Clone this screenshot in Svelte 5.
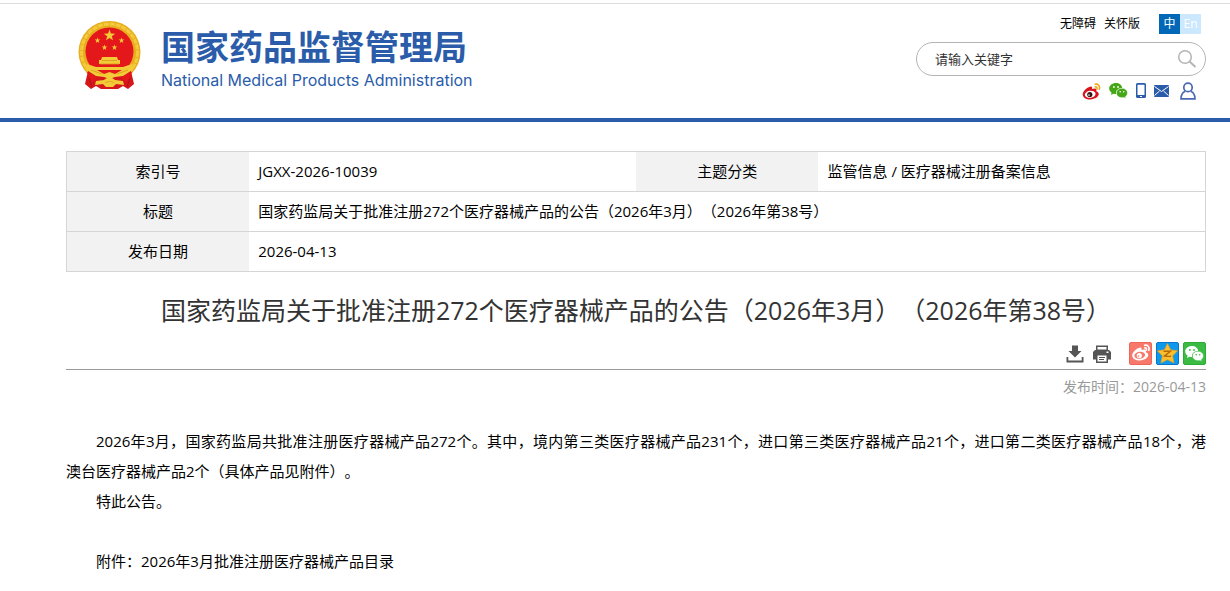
<script lang="ts">
	const title = '国家药监局关于批准注册272个医疗器械产品的公告（2026年3月）（2026年第38号）';
	const date = '2026-04-13';
	let keyword = $state('');

	const star = (cx: number, cy: number, r: number) =>
		Array.from({ length: 10 }, (_, i) => {
			const a = (Math.PI / 5) * i - Math.PI / 2;
			const d = i % 2 ? r * 0.4 : r;
			return `${(cx + d * Math.cos(a)).toFixed(2)},${(cy + d * Math.sin(a)).toFixed(2)}`;
		}).join(' ');
</script>

{#snippet weibo(body: string, eye: string, pupil: string, wave: string)}
	<path fill={body} d="M8.2 4.6C4.6 5.2.2 9.4.2 12.4c0 3.100 3.600 5 7.600 5 4.900 0 8.400-2.700 8.400-5.300 0-1.600-1.100-2.500-2.400-2.900.5-1.600 0-2.600-1.300-2.800-.9-.1-2 .2-3 .6.4-1.600 0-2.600-1.300-2.400z" />
	<ellipse cx="7.700" cy="12.300" rx="5.400" ry="3.500" fill={eye} transform="rotate(-8 7.700 12.300)" />
	<circle cx="7.300" cy="12.500" r="2.600" fill={pupil} />
	<circle cx="6.500" cy="13.100" r=".8" fill={eye} />
	<path fill="none" stroke={wave} stroke-width="1.600" stroke-linecap="round" d="M12.600 2.200c3-.6 5.200 1.900 4.300 5M12.800 4.900c1.400-.2 2.100.8 1.700 2.100" />
{/snippet}

{#snippet wechat(color: string, hole: string)}
	<path fill={color} d="M7 1C3.200 1 .2 3.400.2 6.500c0 1.700.9 3.200 2.400 4.200L2 13l2.500-1.300c.9.3 1.700.4 2.600.4-.6-3.600 2.300-6.100 6.200-6C12.800 3 10.200 1 7 1z" />
	<path fill={color} stroke={hole} stroke-width=".5" d="M12.900 6.300c-3.100 0-5.500 2-5.500 4.700s2.400 4.700 5.500 4.700c.7 0 1.400-.1 2-.3l2 1-.5-1.700c1.300-.9 2.100-2.200 2.100-3.700 0-2.700-2.500-4.700-5.600-4.700z" />
	<g fill={hole}>
		<circle cx="4.900" cy="5" r=".9" />
		<circle cx="9" cy="5" r=".9" />
		<circle cx="11.200" cy="9.700" r=".8" />
		<circle cx="14.700" cy="9.700" r=".8" />
	</g>
{/snippet}

<header>
	<a class="logo" href="#home">
		<svg class="emblem" viewBox="0 0 64 70" aria-hidden="true">
			<circle cx="31.500" cy="32" r="31" fill="#e8ae20" />
			<circle cx="31.500" cy="32" r="28" fill="none" stroke="#f3ca3c" stroke-width="3" stroke-dasharray="5 1" />
			<circle cx="31.500" cy="31.500" r="24" fill="#e4181a" />
			<g fill="#f3cb38">
				<polygon points={star(31.5, 15.5, 6)} />
				<polygon points={star(19.5, 20.5, 3)} />
				<polygon points={star(43.5, 20.5, 3)} />
				<polygon points={star(26.5, 27.5, 3)} />
				<polygon points={star(36.5, 27.5, 3)} />
				<path d="M24 37h15l1 3h2v4H21v-4h2z" />
			</g>
			<path fill="#d5161b" d="M10 51h43l3 13-6 5-5-3-5 3H23l-5-3-5 3-6-5z" />
			<path fill="#f3cb38" d="M9 44l9 3h27l9-3 2 5-11 7-8 1-5.500 2-5.500-2-8-1L7 49z" />
			<path fill="#e4181a" d="M19 50h25l-7 4-5.500-2-5.500 2zM9 52l10 5-5 5zM54 52l-10 5 5 5z" />
			<path fill="#f3cb38" d="M18 61l8-1c3-3 8-3 11 0l8 1 1 4-8-1-3 3h-7l-3-3-8 1z" />
			<path fill="none" stroke="#d9981a" stroke-width=".8" d="M22 44h19M13 50l11 4M50 50l-11 4M27 63c3-2 6-2 9 0M24 40.500h15" />
			<path fill="none" stroke="#a90f16" stroke-width=".8" d="M11 58l3 9M52 58l-3 9" />
		</svg>
		<span class="names">
			<span class="name-zh">国家药品监督管理局</span>
			<span class="name-en">National Medical Products Administration</span>
		</span>
	</a>

	<div class="tools">
		<nav class="top-links">
			<a href="#accessible">无障碍</a>
			<a href="#care">关怀版</a>
			<span class="lang">
				<a class="active" href="#zh">中</a><a href="#en">En</a>
			</span>
		</nav>
		<form class="search" onsubmit={(e) => e.preventDefault()}>
			<input type="text" aria-label="请输入关键字" placeholder="请输入关键字" bind:value={keyword} />
			<button type="submit" aria-label="搜索">
				<svg width="20" height="20" viewBox="0 0 20 20" fill="none" stroke="#b5b5b5" stroke-width="1.500">
					<circle cx="8" cy="8" r="6.300" />
					<path d="M12.500 12.500l6 5.500" stroke-width="2" />
				</svg>
			</button>
		</form>
		<nav class="social">
			<a href="#weibo" aria-label="微博">
				<svg width="19" height="18" viewBox="0 0 18 18">{@render weibo('#d8151c', '#fff', '#3a1414', '#f0a81c')}</svg>
			</a>
			<a href="#wechat" aria-label="微信">
				<svg width="19" height="18" viewBox="0 0 19 18">{@render wechat('#45a616', '#fff')}</svg>
			</a>
			<a href="#mobile" aria-label="移动端">
				<svg width="10" height="18" viewBox="0 0 10 18">
					<path fill="#2a5caa" fill-rule="evenodd" d="M1.500 1h7A1.500 1.500 0 0 1 10 2.500v12A1.500 1.500 0 0 1 8.500 16h-7A1.500 1.500 0 0 1 0 14.500v-12A1.500 1.500 0 0 1 1.500 1zM1.500 2.700v10.300h7V2.700zM4 14v1h2v-1z" />
				</svg>
			</a>
			<a href="#mail" aria-label="邮箱">
				<svg width="15" height="18" viewBox="0 0 15 18">
					<rect y="3" width="15" height="12" rx="1" fill="#2a5caa" />
					<path d="M.5 4.500l7 5 7-5M.5 13.500l5-4.500M14.500 13.500l-5-4.500" fill="none" stroke="#fff" />
				</svg>
			</a>
			<a class="user" href="#user" aria-label="用户">
				<svg width="16" height="18" viewBox="0 0 16 18" fill="none" stroke="#4a68b4" stroke-width="1.700">
					<circle cx="8" cy="5.400" r="4.200" />
					<path d="M5.200 9.200C2.500 10.400 1 12.600 1 16.800h14c0-4.200-1.500-6.400-4.200-7.600" />
				</svg>
			</a>
		</nav>
	</div>
</header>

<main>
	<table>
		<tbody>
			<tr>
				<th scope="row">索引号</th>
				<td>JGXX-2026-10039</td>
				<th scope="row">主题分类</th>
				<td>监管信息 / 医疗器械注册备案信息</td>
			</tr>
			<tr>
				<th scope="row">标题</th>
				<td colspan="3">{title}</td>
			</tr>
			<tr>
				<th scope="row">发布日期</th>
				<td colspan="3">{date}</td>
			</tr>
		</tbody>
	</table>

	<h1>{title}</h1>

	<div class="actions">
		<button aria-label="下载">
			<svg width="18" height="18" viewBox="0 0 18 18" fill="#555">
				<path d="M6 .5h6V6h3.500L9 12.500 2.500 6H6z" />
				<path d="M.5 12v5.500h17V12h-1.800v3.600H2.300V12z" />
			</svg>
		</button>
		<button class="print" aria-label="打印">
			<svg width="18" height="18" viewBox="0 0 18 18">
				<path fill="#555" d="M3 .5h12V5H3zM2 5h14l2 2v7.500h-3V18H3v-3.500H0V7z" />
				<path fill="#fff" d="M4.500 2h9v2.500h-9zM4.500 10.500h9v6h-9zM13.500 6.500h2V8h-2z" />
				<path stroke="#555" d="M6 12.500h6M6 14.500h5" />
			</svg>
		</button>
		<a href="#share-weibo" aria-label="分享到微博">
			<svg width="23" height="23" viewBox="0 0 23 23">
				<rect x=".5" y=".5" width="22" height="22" rx="1.500" fill="#f8786c" stroke="#ee6659" />
				<g transform="translate(3 1)">{@render weibo('#fff', '#f8786c', '#fff', '#fff')}</g>
			</svg>
		</a>
		<a href="#share-qzone" aria-label="分享到QQ空间">
			<svg width="23" height="23" viewBox="0 0 23 23">
				<rect x=".5" y=".5" width="22" height="22" rx="1.500" fill="#0c98ec" stroke="#0975c8" />
				<path fill="#fdbf2d" stroke="#e09a18" stroke-width=".6" stroke-linejoin="round" d="M11.500 1.500l3.200 6.300 7 1-5 5 1.400 7.200-6.600-3.300L4.900 21l1.400-7.200-5-5 7-1z" />
				<path fill="none" stroke="#b66a08" stroke-width="1.400" d="M7.500 9.300h7l-6 4.700c2.200.5 4.500.5 6.500.2" />
			</svg>
		</a>
		<a href="#share-wechat" aria-label="分享到微信">
			<svg width="23" height="23" viewBox="0 0 23 23">
				<rect x=".5" y=".5" width="22" height="22" rx="1.500" fill="#3bbb43" stroke="#2eaa37" />
				<g transform="translate(2 3)">{@render wechat('#fff', '#3bbb43')}</g>
			</svg>
		</a>
	</div>

	<div class="publish">发布时间：{date}</div>

	<article>
		<p>
			2026年3月，国家药监局共批准注册医疗器械产品272个。其中，境内第三类医疗器械产品231个，进口第三类医疗器械产品21个，进口第二类医疗器械产品18个，港<span class="keep">澳台</span>医疗器械产品2个（具体产品见附件）。
		</p>
		<p>特此公告。</p>
		<p class="attachment">附件：<a href="#attachment">2026年3月批准注册医疗器械产品目录</a></p>
	</article>
</main>

<style>
	:global(body) {
		background: #fff;
		color: #000;
		font-family: 'Open Sans', 'Noto Sans CJK SC', sans-serif;
		font-size: 15px;
		text-spacing-trim: space-all;
	}
	a {
		color: inherit;
		text-decoration: none;
	}
	button {
		border: 0;
		padding: 0;
		background: none;
		cursor: pointer;
	}
	svg {
		display: block;
	}

	header {
		display: flex;
		justify-content: space-between;
		align-items: flex-start;
		margin-top: 3px;
		padding: 10px 24px 18px 78px;
		border-top: 1px solid #ddd;
		border-bottom: 4px solid #2a5caa;
	}
	.logo {
		display: flex;
		gap: 19px;
		padding-top: 6px;
		color: #2a5caa;
	}
	.emblem {
		width: 64px;
		height: 70px;
	}
	.names {
		display: flex;
		flex-direction: column;
		padding-top: 6px;
		white-space: nowrap;
	}
	.name-zh {
		font-family: 'Noto Sans CJK SC', sans-serif;
		font-size: 34px;
		font-weight: 700;
		line-height: 40px;
	}
	.name-en {
		font-family: Inter, sans-serif;
		font-size: 16px;
		line-height: 28px;
	}

	.tools {
		width: 290px;
	}
	.top-links {
		display: flex;
		justify-content: flex-end;
		align-items: center;
		gap: 8px;
		padding-right: 5px;
		font-size: 12px;
		line-height: 20px;
	}
	.lang {
		display: flex;
		margin-left: 11px;
		color: #fff;
	}
	.lang a {
		width: 21px;
		text-align: center;
		background: #cce8ff;
	}
	.lang .active {
		background: #0068b7;
	}
	.search {
		display: flex;
		align-items: center;
		box-sizing: border-box;
		height: 34px;
		margin-top: 8px;
		padding: 0 8px 0 18px;
		border: 1px solid #b5b5b5;
		border-radius: 17px;
	}
	.search input {
		flex: 1;
		min-width: 0;
		border: 0;
		padding: 0;
		outline: 0;
		background: none;
		font-family: inherit;
		font-size: 13px;
	}
	.search input::placeholder {
		color: #333;
		opacity: 1;
	}
	.social {
		display: flex;
		justify-content: flex-end;
		gap: 8px;
		margin-top: 6px;
		padding-right: 10px;
	}
	.user {
		margin-left: 3px;
	}

	main {
		padding: 29px 24px 0 66px;
	}
	table {
		width: 100%;
		table-layout: fixed;
		border-collapse: collapse;
		border: 1px solid #d5d5d5;
	}
	tr {
		border-bottom: 1px solid #d5d5d5;
	}
	th,
	td {
		height: 37px;
		padding: 0 0 2px;
		line-height: 24px;
	}
	th {
		width: 16%;
		background: #f2f2f2;
		font-weight: 400;
	}
	td {
		padding-left: 9px;
	}
	h1 {
		margin: 18px 0 0;
		color: #333;
		font-size: 25px;
		font-weight: 400;
		line-height: 40px;
		text-align: center;
	}
	.actions {
		display: flex;
		justify-content: flex-end;
		align-items: center;
		gap: 4px;
		padding: 12px 0 4px;
		border-bottom: 1px solid #999;
	}
	.print {
		margin: 0 14px 0 5px;
	}
	.publish {
		margin-top: 5px;
		color: #999;
		font-size: 14px;
		line-height: 24px;
		text-align: right;
	}
	article {
		margin-top: 27px;
		line-height: 30px;
		text-align: justify;
	}
	p {
		margin: 0;
		text-indent: 2em;
	}
	.keep {
		white-space: nowrap;
	}
	.attachment {
		margin-top: 30px;
	}
</style>
